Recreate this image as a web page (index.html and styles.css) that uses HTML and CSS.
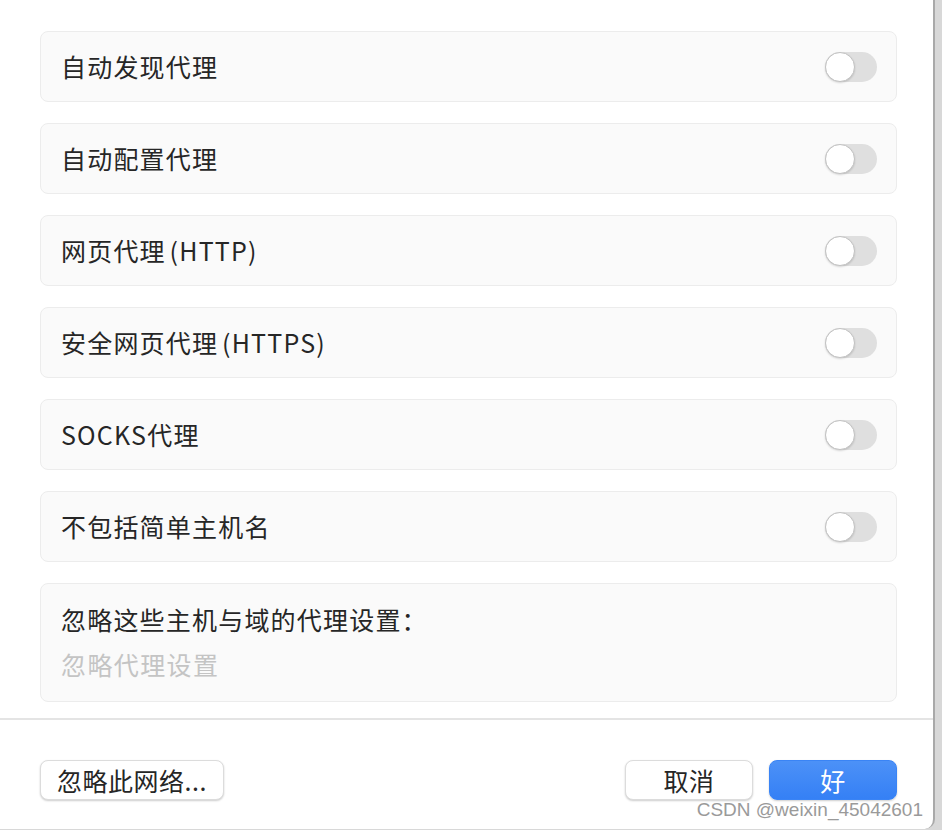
FILE: index.html
```html
<html><head>
<meta charset="utf-8">
<link rel="stylesheet" href="styles.css">
</head>
<body>
  <div class="sheet">
    <div class="list">
      <div class="row">
        <span class="label">自动发现代理</span>
        <div class="switch"><div class="knob"></div></div>
      </div>
      <div class="row">
        <span class="label">自动配置代理</span>
        <div class="switch"><div class="knob"></div></div>
      </div>
      <div class="row">
        <span class="label">网页代理 (HTTP)</span>
        <div class="switch"><div class="knob"></div></div>
      </div>
      <div class="row">
        <span class="label">安全网页代理 (HTTPS)</span>
        <div class="switch"><div class="knob"></div></div>
      </div>
      <div class="row">
        <span class="label">SOCKS代理</span>
        <div class="switch"><div class="knob"></div></div>
      </div>
      <div class="row">
        <span class="label">不包括简单主机名</span>
        <div class="switch"><div class="knob"></div></div>
      </div>
      <div class="row bypass">
        <span class="label">忽略这些主机与域的代理设置：</span>
        <span class="placeholder">忽略代理设置</span>
      </div>
    </div>

    <div class="footer">
      <div class="btn">忽略此网络...</div>
      <div class="actions">
        <div class="btn cancel">取消</div>
        <div class="btn primary">好</div>
      </div>
    </div>
    <div class="watermark">CSDN @weixin_45042601</div>
  </div>
</body></html>
```

FILE: styles.css
```css
body {
  margin: 0;
  background: #d8d8d8;
  font-family: "Noto Sans CJK SC", "Liberation Sans", sans-serif;
  color: #262626;
}

.sheet {
  width: 935px;
  height: 829px;
  background: #ffffff;
  border-right: 2px solid #a9a9a9;
  border-bottom-right-radius: 10px;
  position: relative;
  box-sizing: border-box;
}

.list {
  padding: 31px 36px 16px 40px;
  display: flex;
  flex-direction: column;
  gap: 21px;
  border-bottom: 2px solid #e4e4e4;
}

.row {
  height: 71px;
  box-sizing: border-box;
  background: #fafafa;
  border: 1px solid #ececec;
  border-radius: 8px;
  display: flex;
  align-items: center;
  justify-content: space-between;
  padding: 0 19px 2px 20px;
}

.label {
  font-size: 25px;
  letter-spacing: 1.2px;
  line-height: 1.2;
  word-spacing: -3px;
}

.switch {
  width: 52px;
  height: 30px;
  border-radius: 15px;
  background: #dfdfdf;
  position: relative;
  margin-top: 2px;
}

.knob {
  position: absolute;
  left: 0;
  top: 0;
  width: 28px;
  height: 28px;
  border-radius: 50%;
  background: #ffffff;
  border: 1px solid #c2c2c2;
  box-shadow: 0 1px 2px rgba(0,0,0,0.15);
}

.row.bypass {
  height: 119px;
  flex-direction: column;
  align-items: flex-start;
  justify-content: flex-start;
  padding-top: 20px;
  gap: 15px;
}

.placeholder {
  font-size: 25px;
  letter-spacing: 1.4px;
  line-height: 1.2;
  color: #c4c4c4;
}

.footer {
  display: flex;
  justify-content: space-between;
  align-items: center;
  padding: 40px 36px 0 40px;
}

.actions {
  display: flex;
  gap: 16px;
}

.btn {
  height: 40px;
  box-sizing: border-box;
  padding: 0 16px;
  border-radius: 8px;
  background: #ffffff;
  border: 1px solid #dcdcdc;
  box-shadow: 0 1px 2px rgba(0,0,0,0.2);
  font-size: 25px;
  letter-spacing: 0.5px;
  display: flex;
  align-items: center;
  justify-content: center;
}

.btn.cancel {
  width: 128px;
}

.btn.primary {
  width: 128px;
  background: linear-gradient(180deg, #4c91f7, #3580f5);
  border-color: #3a84f5;
  color: #ffffff;
}

.watermark {
  position: absolute;
  right: 10px;
  bottom: 8px;
  font-family: "Liberation Sans", sans-serif;
  font-size: 19px;
  color: #9a9a9a;
}
```
